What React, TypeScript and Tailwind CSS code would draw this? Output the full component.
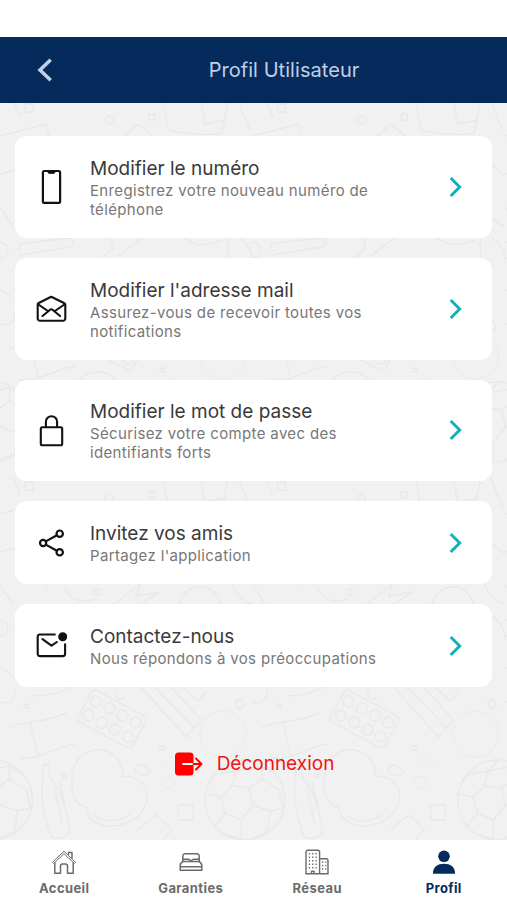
import type { ReactNode } from 'react';
import clsx from 'clsx';

type MenuItem = {
  title: string;
  text: string;
  tall?: boolean;
  icon: ReactNode;
};

const PhoneIcon = () => (
  <svg width="32" height="40" viewBox="0 0 32 40" fill="none" stroke="#111" strokeWidth="2.2" strokeLinejoin="round">
    <rect x="7.9" y="4" width="17.2" height="31.800" rx="1.400" />
    <path d="M12.500 4h8l-1.200 2.300h-5.600z" fill="#111" strokeWidth="1" />
  </svg>
);

const MailOpenIcon = () => (
  <svg width="32" height="40" viewBox="0 0 32 40" fill="none" stroke="#111" strokeWidth="2.1" strokeLinecap="round" strokeLinejoin="round">
    <path d="M3.200 14.300 16.200 7.800 29.500 14.300c.5.300.8.8.8 1.400v13.800a2.300 2.300 0 0 1-2.300 2.300h-23a2.300 2.300 0 0 1-2.300-2.300V15.700c0-.6.2-1.100.5-1.400z" />
    <path d="M3.400 15.500l9.500 6.500M29.400 15.500l-9.500 6.500M7.500 27l7.600-6.300c.8-.6 1.600-.6 2.400 0l7.600 6.300" />
  </svg>
);

const LockIcon = () => (
  <svg width="32" height="40" viewBox="0 0 32 40" fill="none" stroke="#111" strokeWidth="2.1" strokeLinejoin="round">
    <rect x="5.800" y="17.300" width="21.400" height="18" rx="1.500" />
    <path d="M10.900 17v-5.200a5.500 5.500 0 0 1 11.200 0V17" />
  </svg>
);

const ShareIcon = () => (
  <svg width="32" height="40" viewBox="0 0 32 40" fill="none" stroke="#111" strokeWidth="2.2">
    <circle cx="8.100" cy="20" r="3.100" />
    <circle cx="24.700" cy="10.700" r="3.200" />
    <circle cx="24.700" cy="29.300" r="3.200" />
    <path d="M10.800 18.400l11.100-6.200M10.800 21.600l11.100 6.200" />
  </svg>
);

const MailDotIcon = () => (
  <svg width="32" height="40" viewBox="0 0 32 40" fill="none" stroke="#111" strokeWidth="2.1" strokeLinecap="round" strokeLinejoin="round">
    <path d="M19.800 8.500H4.800A2.300 2.300 0 0 0 2.700 10.800v17A2.300 2.300 0 0 0 5 30.100h22.800a2.300 2.300 0 0 0 2.300-2.300V18.200" />
    <path d="M7.500 13.200l9 6.500 5.400-3.700" />
    <circle cx="27.700" cy="10.700" r="4.500" fill="#111" stroke="none" />
  </svg>
);

const items: MenuItem[] = [
  {
    title: 'Modifier le numéro',
    text: 'Enregistrez votre nouveau numéro de téléphone',
    tall: true,
    icon: <PhoneIcon />,
  },
  {
    title: "Modifier l'adresse mail",
    text: 'Assurez-vous de recevoir toutes vos notifications',
    tall: true,
    icon: <MailOpenIcon />,
  },
  {
    title: 'Modifier le mot de passe',
    text: 'Sécurisez votre compte avec des identifiants forts',
    tall: true,
    icon: <LockIcon />,
  },
  { title: 'Invitez vos amis', text: "Partagez l'application", icon: <ShareIcon /> },
  { title: 'Contactez-nous', text: 'Nous répondons à vos préoccupations', icon: <MailDotIcon /> },
];

const HomeIcon = () => (
  <svg width="26" height="26" viewBox="0 0 26 26" fill="none" stroke="currentColor" strokeWidth="1.500" strokeLinejoin="round">
    <path d="M1.500 13.200 13 2.200l11.500 11-1.200 1.200L13 4.700 2.700 14.400z" strokeWidth="1" />
    <path d="M3.800 13.500v10.700h5.700v-7.200a2 2 0 0 1 2-2h3a2 2 0 0 1 2 2v7.200h5.700V13.500M17.500 5.800V3.500h3.500v6" />
  </svg>
);

const BedIcon = () => (
  <svg width="26" height="26" viewBox="0 0 26 26" fill="none" stroke="currentColor" strokeWidth="1.500" strokeLinejoin="round">
    <path d="M4.800 12.500V7a2.200 2.200 0 0 1 2.200-2.200h12A2.200 2.200 0 0 1 21.200 7v5.500" />
    <path d="M4.800 10.300h5.700c1 0 1.500 1.300 2.500 1.300s1.500-1.300 2.500-1.300h5.700" />
    <path d="M5 12.500h16c1 .5 2.800 2 2.800 4v4.700H2.200v-4.700c0-2 1.800-3.500 2.800-4zM2.200 17.700h21.600" />
  </svg>
);

const BuildingIcon = () => (
  <svg width="26" height="26" viewBox="0 0 26 26" fill="none" stroke="currentColor" strokeWidth="1.400" strokeLinejoin="round">
    <path d="M2 24.800V3A1.800 1.800 0 0 1 3.800 1.200h10A1.800 1.800 0 0 1 15.600 3v21.800M15.600 9.700h6.700a1.700 1.700 0 0 1 1.700 1.700v13.400M1.300 24.800H24.700M7.500 24.500v-2.200h2.600v2.200" />
    <path d="M4.800 4.800h8.500M4.800 8.300h8.500M4.800 11.800h8.500M4.800 15.300h8.500M4.800 18.800h8.500M18 13h4.500M18 16.500h4.500M18 20h4.500" strokeDasharray="1.300 2" />
  </svg>
);

const UserIcon = () => (
  <svg width="26" height="26" viewBox="0 0 26 26" fill="currentColor">
    <circle cx="13" cy="7.300" r="5.800" />
    <path d="M2 24.800v-1.600C2.500 18 6.500 14.800 13 14.800S23.500 18 24 23.200v1.600z" />
  </svg>
);

const tabs = [
  { label: 'Accueil', icon: <HomeIcon /> },
  { label: 'Garanties', icon: <BedIcon /> },
  { label: 'Réseau', icon: <BuildingIcon /> },
  { label: 'Profil', icon: <UserIcon />, active: true },
];

// Faint line drawings repeated behind the cards
const Wallpaper = () => (
  <svg className="absolute inset-0 h-full w-full" fill="none" stroke="#e8e8e8" strokeWidth="1.400" strokeLinejoin="round" strokeLinecap="round">
    <defs>
      <g id="ball">
        <circle cx="0" cy="0" r="40" />
        <path d="M-24-3-13-14 4-12 8 5-4 20-20 13zM-24-3-38-6M-13-14-9-29M4-12 17-21M8 5 25 11M-4 20-4 39M-20 13-30 26M-36-16-30-26-9-29 0-39M-9-29 17-34M17-21 17-34 30-26M17-21 34-10 38 8 25 11 22 32 8 38M-4 39-18 35" />
      </g>
      <pattern id="toys" width="252.500" height="378" patternUnits="userSpaceOnUse" y="359">
        <use href="#ball" x="245" y="338" />
        <use href="#ball" x="-7.500" y="338" />
        <g transform="translate(112 257) rotate(28)">
          <rect x="-31" y="-18" width="62" height="36" rx="4" />
          <path d="M-28-8a5.500 5.500 0 1 0 11 0a5.500 5.500 0 1 0-11 0M-13-8a5.500 5.500 0 1 0 11 0a5.500 5.500 0 1 0-11 0M2-8a5.500 5.500 0 1 0 11 0a5.500 5.500 0 1 0-11 0M17-8a5.500 5.500 0 1 0 11 0a5.500 5.500 0 1 0-11 0M-28 8a5.500 5.500 0 1 0 11 0a5.500 5.500 0 1 0-11 0M-13 8a5.500 5.500 0 1 0 11 0a5.500 5.500 0 1 0-11 0M2 8a5.500 5.500 0 1 0 11 0a5.500 5.500 0 1 0-11 0M17 8a5.500 5.500 0 1 0 11 0a5.500 5.500 0 1 0-11 0" />
        </g>
        <path d="M123 314c0-34-48-36-51 0-2 18 4 30 14 31 2 24 40 24 54 7 14-18 6-38-17-38M95 354c10 7 26 6 35-2" />
        <path d="M43 303l5-1 2 14c9 9 16 24 20 54-3 6-15 8-19 4-7-20-11-40-8-57zM54 325l8 36M60 320l5 25" />
        <path d="M10 265c20-7 35-4 56-14M30 260l8 33M20 296c22 2 30-10 55-14" />
        <path d="M141 225l45 50 15-17-30-33M155 225l38 40M182 225l16 14 8-9M35 234q22 0 36-9M0 240q14 4 15-12" />
        <circle cx="223" cy="272" r="23" stroke="#ececec" />
        <path d="M178 343h15v15h-15zM135 307c4-8 12-3 16 3-5 5-13 4-16-3M160 284h4v4h-4zM138 368l18-15 16 14-10 12M62 312h4v4h-4zM24 242h4v4h-4zM235 240l6-3 3 7-6 3zM125 236a6 6 0 1 1-8-9" />
        <path d="M163 300l10-6 8 8M162 320a6 6 0 1 0 12 0a6 6 0 1 0-12 0" stroke="#ececec" />
        <path d="M25 20h8v8h-8zM105 36a4 4 0 1 0 8 0a4 4 0 1 0-8 0M149 30h6v6h-6zM163 15l5 30c2 4 50 8 54 3l6-30M201 18l4 22 20-4M125 52l13-12 15 12M0 52l46-12 3 12M13 16l7 16M238 16l12 30" />
        <path d="M20 167c-3-5 0-8 5-8l44-5c5 0 5 8 0 9l-49 8M110 150l3 14-12 12M145 152l-27 20M182 152q16 15 40 4M228 150v24M240 154q14 12 12 22M0 158a8 8 0 0 1 0 16M0 205l12 8M0 90l15-4M238 80l14 12" />
        <path d="M65 126q8 18 30 11M94 130a3 3 0 1 0 6 0a3 3 0 1 0-6 0M112 144l28-22-4 12 24-4-23 15M179 146a21 21 0 0 1 42 0M45 128h2M0 123l12 18M232 122q8 18 20 20" />
      </pattern>
    </defs>
    <rect width="100%" height="100%" fill="#f1f1f1" stroke="none" />
    <rect width="100%" height="100%" fill="url(#toys)" stroke="none" />
  </svg>
);

const Chevron = () => (
  <svg width="16" height="24" viewBox="0 0 16 24" fill="none" stroke="#14b0bd" strokeWidth="3">
    <path d="M2.700 3l9 9-9 9" />
  </svg>
);

export default function App() {
  return (
    <div className="flex h-[900px] w-full flex-col overflow-hidden bg-white font-['Inter',sans-serif]">
      <header className="mt-[37px] grid h-[66px] shrink-0 grid-cols-[60px_1fr_60px] items-center bg-[#052a5c] text-[#c0cfe4]">
        <button className="pl-9" aria-label="Retour">
          <svg width="18" height="26" viewBox="0 0 18 26" fill="none" stroke="currentColor" strokeWidth="3.600">
            <path d="M14.700 2.700 4 13l10.700 10.300" />
          </svg>
        </button>
        <h1 className="pl-[61px] text-center text-xl tracking-[0.05px]">Profil Utilisateur</h1>
      </header>

      <main className="relative flex-1">
        <Wallpaper />
        <div className="relative flex flex-col gap-5 px-[15px] pt-[33px]">
          {items.map((item) => (
            <div
              key={item.title}
              className={clsx('flex items-center rounded-xl bg-white', item.tall ? 'h-[101.8px]' : 'h-[82.8px]')}
            >
              <div className="ml-5 w-[55px] shrink-0">{item.icon}</div>
              <div className="w-[300px] pt-0.5">
                <h2 className="text-[19px] leading-6 text-[#3a3a3a]">{item.title}</h2>
                <p className="text-[15px] leading-[19px] tracking-[0.35px] text-[#777]">{item.text}</p>
              </div>
              <div className="mr-7 ml-auto">
                <Chevron />
              </div>
            </div>
          ))}
          <button className="mt-[43px] flex items-center justify-center gap-3.5 pl-0.5 text-[19px] leading-7 text-[#f01414]">
            <svg width="28" height="26" viewBox="0 0 28 26" fill="none" strokeLinecap="round" strokeLinejoin="round">
              <rect x="0" y="1.500" width="18.500" height="23" rx="3.500" fill="#f00" />
              <path d="M8 13h10" stroke="#fff" strokeWidth="1.800" />
              <path d="M18.500 13h8M21 7.500l5.500 5.500-5.500 5.500" stroke="#f00" strokeWidth="1.900" />
            </svg>
            Déconnexion
          </button>
        </div>
      </main>

      <nav className="grid h-[60px] shrink-0 grid-cols-4 bg-white pl-px">
        {tabs.map((tab) => (
          <a key={tab.label} className={clsx('flex flex-col items-center pt-[9px]', tab.active ? 'text-[#052a5c]' : 'text-[#6b6b6b]')}>
            {tab.icon}
            <span className="mt-[5px] text-[13px] leading-4 font-bold tracking-[0.4px]">{tab.label}</span>
          </a>
        ))}
      </nav>
    </div>
  );
}
